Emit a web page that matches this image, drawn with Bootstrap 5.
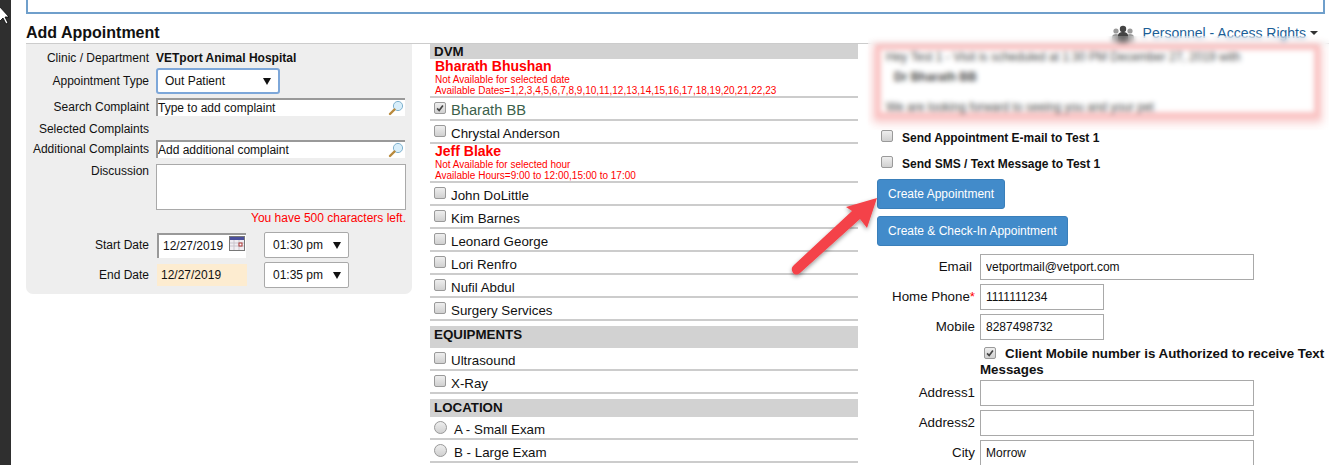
<!DOCTYPE html>
<html lang="en">
<head>
    <meta charset="UTF-8">
    <meta name="viewport" content="width=device-width, initial-scale=1.0">
    <title>Add Appointment</title>
    <link rel="stylesheet" href="https://cdn.jsdelivr.net/npm/bootstrap@5.3.0/dist/css/bootstrap.min.css">
    <script src="https://cdn.jsdelivr.net/npm/bootstrap@5.3.0/dist/js/bootstrap.bundle.min.js"></script>
    <style>
        html, body { height: 465px; overflow: hidden; }
        body { font-family: "Liberation Sans", Arial, sans-serif; font-size: 12px; color: #111; background: #fff; }
        .side-bar { width: 11px; height: 465px; background: #2f2f2f; flex: none; }
        .page-main { width: 1318px; padding-left: 15px; flex: none; }
        .notice-box { width: 1299px; height: 14px; border: 2px solid #6f9fcb; border-top: 0; }
        .head-row { width: 1303px; height: 30px; border-bottom: 1px solid #ccc; }
        .head-row h1 { font-size: 16px; font-weight: 700; margin: 10px 0 0; line-height: 18px; color: #111; }
        .access-link { color: #1c5f97; font-size: 14px; line-height: 16px; margin: 11px 11px 0 0; text-decoration: none; }
        .access-link svg { margin-right: 8px; }
        .access-caret { display: inline-block; margin-left: 4px; border-top: 4px solid #333; border-left: 4px solid transparent; border-right: 4px solid transparent; vertical-align: 3px; }

        .gap-2px { margin-top: 2px; }
        .gap-4px { margin-top: 4px; }
        .gap-6px { margin-top: 6px; }
        .gap-7px { margin-top: 7px; }

        /* left panel */
        .appt-panel { width: 386px; height: 250px; background: #eee; border-radius: 0 0 7px 7px; padding-top: 3px; margin-right: 18px; flex: none; }
        .fld-row { display: flex; align-items: center; }
        .fld-label { width: 123px; margin-right: 7px; text-align: right; line-height: 14px; flex: none; }
        .fld-h21 { height: 21px; }
        .fld-h18 { height: 18px; }
        .picker-input { position: relative; width: 249px; height: 18px; background: #fff; border-top: 2px solid #999; border-left: 2px solid #999; line-height: 17px; padding-left: 0; }
        .picker-input svg { position: absolute; right: 1px; top: 0; }
        .appt-select.form-select { font-size: 12px; line-height: 14px; color: #111; border: 1px solid #a9a9a9; border-radius: 2px; padding: 0 0 0 8px; height: 26px; background-image: url("data:image/svg+xml,%3Csvg xmlns='http://www.w3.org/2000/svg' width='8' height='7'%3E%3Cpath d='M0 0h8L4 7z' fill='%23111'/%3E%3C/svg%3E"); background-position: right 7px center; background-size: 8px 7px; }
        .appt-select.type-select { width: 124px; border: 2px solid #7da7d9; border-radius: 3px; padding-left: 7px; }
        .appt-select.time-select { width: 85px; }
        .discuss-area.form-control { width: 250px; height: 46px; border: 1px solid #a9a9a9; border-radius: 0; padding: 2px; font-size: 12px; resize: none; }
        .chars-left { color: #f00; text-align: right; width: 380px; height: 13px; line-height: 13px; margin-top: 2px; }
        .date-start { position: relative; width: 89px; height: 25px; margin-left: 1px; margin-right: 18px; background: #fff; border-top: 2px solid #999; border-left: 2px solid #999; line-height: 23px; padding-left: 4px; }
        .date-start svg { position: absolute; left: 70px; top: 1px; }
        .date-end { width: 90px; height: 22px; margin-left: 1px; margin-right: 17px; background: #fdecd0; line-height: 22px; padding-left: 4px; }

        /* middle column */
        .res-col { width: 428px; margin-right: 17px; flex: none; }
        .res-head { background: #d2d2d2; font-weight: 700; font-size: 13.33px; padding-left: 4px; color: #111; }
        .head-dvm { height: 15px; line-height: 15px; }
        .head-equip { height: 22px; line-height: 17px; margin-top: 5px; }
        .head-loc { height: 18px; line-height: 17px; margin-top: 5px; }
        .res-row { height: 23px; border-bottom: 2px solid #ccc; padding: 3px 0 0 4px; font-size: 13.33px; line-height: 19px; display: flex; align-items: flex-start; }
        .res-row label { margin: 0; }
        .res-off { height: 39px; border-bottom: 2px solid #ccc; padding: 0 0 0 5px; color: #f00; font-size: 10px; line-height: 11px; }
        .res-off strong { display: block; font-size: 14px; line-height: 15px; }
        .res-off span { display: block; }
        .res-on { color: #3b5f4b; font-size: 14.67px; }
        .tick-box.form-check-input { width: 12px; height: 12px; margin: 1px 5px 0 0; flex: none; border: 1px solid #9a9a9a; border-radius: 2px; background-color: #ddd; background-image: linear-gradient(#eee, #d0d0d0); }
        .tick-box.form-check-input:checked { border-color: #9a9a9a; background-color: #ddd; background-image: url("data:image/svg+xml,%3Csvg xmlns='http://www.w3.org/2000/svg' viewBox='0 0 12 12'%3E%3Cpath d='M2.5 6.5l2.5 2.5 4.5-6' fill='none' stroke='%23444' stroke-width='2'/%3E%3C/svg%3E"), linear-gradient(#eee, #d0d0d0); background-size: 100% 100%; }
        .tick-box.form-check-input[type=radio] { width: 13px; height: 13px; border-radius: 50%; margin-right: 7px; }

        /* right column */
        .right-col { width: 450px; flex: none; }
        .msg-box { width: 445px; height: 74px; border: 6px solid #f9b6b6; padding: 0 5px; background: #fff; box-shadow: 0 3px 7px 2px #f9c0c0; }
        .msg-box p { margin: 0; line-height: 14px; font-size: 12px; color: #111; }
        .msg-name { font-weight: 700; margin: 6px 0 16px 8px !important; }
        .send-row { height: 22px; padding-left: 6px; font-weight: 700; display: flex; align-items: flex-start; line-height: 22px; }
        .send-row .tick-box.form-check-input { margin: 3px 9px 0 0; }
        .send-first { margin-top: 9px; }
        .appt-btn.btn { display: block; height: 30px; padding: 0 10px; font-size: 12px; line-height: 28px; color: #fff; background: #428bca; border: 1px solid #3a7fba; border-radius: 3px; margin-left: 2px; }
        .client-row { display: flex; align-items: center; margin-top: 4px; font-size: 13.33px; }
        .client-first { margin-top: 8px; }
        .client-label { width: 100px; margin-right: 5px; text-align: right; flex: none; }
        .label-email { padding-right: 3px; }
        .client-label b { color: #f00; font-weight: 400; }
        .client-input.form-control { height: 26px; width: 274px; border: 1px solid #a9a9a9; border-radius: 0; font-size: 12px; padding: 0 5px; color: #111; }
        .client-input.short-input { width: 124px; }
        .auth-text { width: 350px; margin-left: 105px; font-size: 13.33px; font-weight: 700; line-height: 16px; height: 36px; padding-top: 6px; margin-bottom: 4px; }
        .auth-text .tick-box.form-check-input { float: none; display: inline-block; margin: 0 9px 0 4px; vertical-align: -1px; }

        /* things lying over the page */
        .blur-cover { position: absolute; left: 868px; top: 36px; width: 461px; height: 94px; backdrop-filter: blur(2.5px); background: rgba(255, 255, 255, .2); }
        .big-arrow { position: absolute; left: 785px; top: 190px; }
        .mouse-arrow { position: absolute; left: 0; top: 6px; }
    </style>
</head>
<body>
    <div class="d-flex">
        <div class="side-bar"></div>
        <div class="page-main">
            <div class="notice-box"></div>
            <div class="head-row d-flex justify-content-between align-items-start">
                <h1>Add Appointment</h1>
                <a class="access-link d-flex align-items-start" href="#">
                    <svg width="24" height="20" viewBox="0 0 24 20">
                        <g fill="#9a9a9a"><circle cx="5" cy="6" r="2.6"/><circle cx="19" cy="6" r="2.6"/><path d="M1 17v-5c0-2 2-3 4-3s4 1 4 3v5zM15 17v-5c0-2 2-3 4-3s4 1 4 3v5z"/></g>
                        <g fill="#444"><circle cx="12" cy="4" r="3.2"/><path d="M7 18v-7c0-3 2-4 5-4s5 1 5 4v7z"/></g>
                    </svg>
                    <span>Personnel - Access Rights<i class="access-caret"></i></span>
                </a>
            </div>

            <div class="d-flex">
                <div class="appt-panel">
                    <div class="fld-row fld-h21"><div class="fld-label">Clinic / Department</div><strong>VETport Animal Hospital</strong></div>
                    <div class="fld-row">
                        <div class="fld-label">Appointment Type</div>
                        <select class="form-select appt-select type-select"><option>Out Patient</option></select>
                    </div>
                    <div class="fld-row gap-4px">
                        <div class="fld-label">Search Complaint</div>
                        <div class="picker-input">Type to add complaint
                            <svg width="16" height="16" viewBox="0 0 16 16"><circle cx="10" cy="6" r="4.6" fill="#d8eefa" stroke="#7fb2cf"/><path d="M6.5 9.5L2 14" stroke="#b98a3c" stroke-width="2.4" stroke-linecap="round"/></svg>
                        </div>
                    </div>
                    <div class="fld-row fld-h18 gap-4px"><div class="fld-label">Selected Complaints</div></div>
                    <div class="fld-row gap-2px">
                        <div class="fld-label">Additional Complaints</div>
                        <div class="picker-input">Add additional complaint
                            <svg width="16" height="16" viewBox="0 0 16 16"><circle cx="10" cy="6" r="4.6" fill="#d8eefa" stroke="#7fb2cf"/><path d="M6.5 9.5L2 14" stroke="#b98a3c" stroke-width="2.4" stroke-linecap="round"/></svg>
                        </div>
                    </div>
                    <div class="fld-row align-items-start gap-6px">
                        <div class="fld-label">Discussion</div>
                        <textarea class="form-control discuss-area"></textarea>
                    </div>
                    <div class="chars-left">You have 500 characters left.</div>
                    <div class="fld-row gap-7px">
                        <div class="fld-label">Start Date</div>
                        <div class="date-start">12/27/2019
                            <svg width="16" height="16" viewBox="0 0 16 16"><rect x=".5" y=".5" width="15" height="14" fill="#f1eef2" stroke="#777"/><rect x="1" y="1" width="14" height="3" fill="#4a4f9c"/><path d="M1 7h14M1 10h14M5 4v10M10 4v10" stroke="#c9c4cc"/><rect x="10" y="7" width="3" height="3" fill="#fff" stroke="#a33"/></svg>
                        </div>
                        <select class="form-select appt-select time-select"><option>01:30 pm</option></select>
                    </div>
                    <div class="fld-row gap-4px">
                        <div class="fld-label">End Date</div>
                        <div class="date-end">12/27/2019</div>
                        <select class="form-select appt-select time-select"><option>01:35 pm</option></select>
                    </div>
                </div>

                <div class="res-col">
                    <div class="res-head head-dvm">DVM</div>
                    <div class="res-off"><strong>Bharath Bhushan</strong><span>Not Available for selected date</span><span>Available Dates=1,2,3,4,5,6,7,8,9,10,11,12,13,14,15,16,17,18,19,20,21,22,23</span></div>
                    <div class="res-row res-on"><input class="form-check-input tick-box" type="checkbox" checked><label>Bharath BB</label></div>
                    <div class="res-row"><input class="form-check-input tick-box" type="checkbox"><label>Chrystal Anderson</label></div>
                    <div class="res-off"><strong>Jeff Blake</strong><span>Not Available for selected hour</span><span>Available Hours=9:00 to 12:00,15:00 to 17:00</span></div>
                    <div class="res-row"><input class="form-check-input tick-box" type="checkbox"><label>John DoLittle</label></div>
                    <div class="res-row"><input class="form-check-input tick-box" type="checkbox"><label>Kim Barnes</label></div>
                    <div class="res-row"><input class="form-check-input tick-box" type="checkbox"><label>Leonard George</label></div>
                    <div class="res-row"><input class="form-check-input tick-box" type="checkbox"><label>Lori Renfro</label></div>
                    <div class="res-row"><input class="form-check-input tick-box" type="checkbox"><label>Nufil Abdul</label></div>
                    <div class="res-row"><input class="form-check-input tick-box" type="checkbox"><label>Surgery Services</label></div>
                    <div class="res-head head-equip">EQUIPMENTS</div>
                    <div class="res-row"><input class="form-check-input tick-box" type="checkbox"><label>Ultrasound</label></div>
                    <div class="res-row"><input class="form-check-input tick-box" type="checkbox"><label>X-Ray</label></div>
                    <div class="res-head head-loc">LOCATION</div>
                    <div class="res-row"><input class="form-check-input tick-box" type="radio" name="loc"><label>A - Small Exam</label></div>
                    <div class="res-row"><input class="form-check-input tick-box" type="radio" name="loc"><label>B - Large Exam</label></div>
                </div>

                <div class="right-col">
                    <div class="msg-box">
                        <p>Hey Test 1 - Visit is scheduled at 1:30 PM December 27, 2019 with</p>
                        <p class="msg-name">Dr Bharath BB</p>
                        <p>We are looking forward to seeing you and your pet</p>
                    </div>
                    <div class="send-row send-first"><input class="form-check-input tick-box" type="checkbox"><span>Send Appointment E-mail to Test 1</span></div>
                    <div class="send-row gap-4px"><input class="form-check-input tick-box" type="checkbox"><span>Send SMS / Text Message to Test 1</span></div>
                    <button class="btn appt-btn gap-4px">Create Appointment</button>
                    <button class="btn appt-btn gap-7px">Create &amp; Check-In Appointment</button>
                    <div class="client-row client-first"><div class="client-label label-email">Email</div><input class="form-control client-input" value="vetportmail@vetport.com"></div>
                    <div class="client-row"><div class="client-label">Home Phone<b>*</b></div><input class="form-control client-input short-input" value="1111111234"></div>
                    <div class="client-row"><div class="client-label">Mobile</div><input class="form-control client-input short-input" value="8287498732"></div>
                    <div class="auth-text"><input class="form-check-input tick-box" type="checkbox" checked>Client Mobile number is Authorized to receive Text Messages</div>
                    <div class="client-row"><div class="client-label">Address1</div><input class="form-control client-input"></div>
                    <div class="client-row"><div class="client-label">Address2</div><input class="form-control client-input"></div>
                    <div class="client-row"><div class="client-label">City</div><input class="form-control client-input" value="Morrow"></div>
                </div>
            </div>
        </div>
    </div>

    <div class="blur-cover"></div>

    <svg class="big-arrow" width="100" height="95" viewBox="0 0 100 95">
        <defs><filter id="arrowShadow" x="-20%" y="-20%" width="140%" height="140%"><feDropShadow dx="0" dy="2" stdDeviation="2" flood-color="#000" flood-opacity=".4"/></filter></defs>
        <path d="M92 8L82 38 75 29 15 83Q11 86 8 83 5 78 9 75L67 21 61 17z" fill="#f44248" filter="url(#arrowShadow)"/>
    </svg>

    <svg class="mouse-arrow" width="12" height="20" viewBox="0 0 12 20">
        <path d="M-1 0L9 11H5l3 6-2 1-3-6-4 4z" fill="#fff" stroke="#000" stroke-width=".8"/>
    </svg>
</body>
</html>
